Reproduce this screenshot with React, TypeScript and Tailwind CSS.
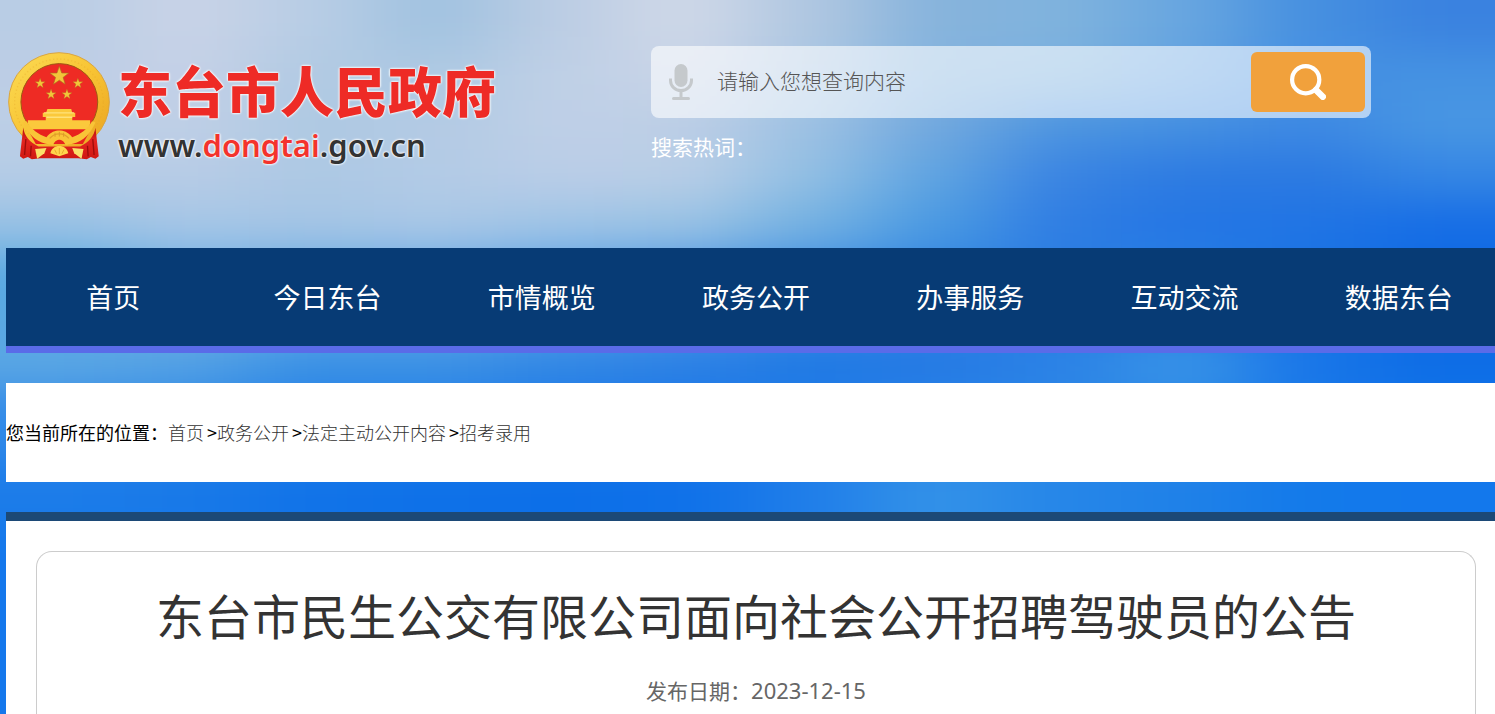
import { type FormEvent } from 'react';

const navItems = ['首页', '今日东台', '市情概览', '政务公开', '办事服务', '互动交流', '数据东台'];

const crumbs = ['首页', '政务公开', '法定主动公开内容', '招考录用'];

// Sky backdrop: rows of colour patches that are blurred into each other
const skyRows = [
  { y: 0, h: 50, colors: ['#b9cde5', '#c9d3e7', '#b8cde5', '#a0c2e0', '#bccde4', '#cfd8e8', '#b0c7e1', '#86b3dc', '#80b3dd', '#68a6e0', '#4690e0', '#3a82e0'] },
  { y: 50, h: 50, colors: ['#bccde5', '#c5d1e7', '#b1cae3', '#aec9e3', '#bfd0e6', '#c9d4e8', '#aac6e3', '#82b2df', '#78afdf', '#62a2e0', '#4490e3', '#4592e2'] },
  { y: 100, h: 50, colors: ['#bccfe6', '#bfcfe6', '#aec9e3', '#b3cae4', '#bfd0e7', '#bccee6', '#9dc1e3', '#72a8de', '#4d95e0', '#4590e1', '#3d88e3', '#4896e3'] },
  { y: 150, h: 50, colors: ['#b5cce6', '#b8cce6', '#adc8e4', '#b3cbe6', '#bacde7', '#b9cee6', '#92bfe3', '#5fa4e1', '#3a84e2', '#2d7be2', '#2b79e2', '#3586e4'] },
  { y: 200, h: 50, colors: ['#98c1e4', '#a6c6e6', '#a4c5e5', '#a9c7e6', '#9fc4e6', '#99c2e4', '#74b1e2', '#4a9ae2', '#2f7de3', '#2476e4', '#2074e4', '#166de5'] },
  { y: 250, h: 90, colors: ['#5aa9e2', '#74b1e5', '#6cace5', '#6cabe6', '#5ea3e6', '#529ae4', '#408fe2', '#3486e2', '#2a7ee3', '#287fe4', '#1a74e5', '#0f6be5'] },
  { y: 340, h: 50, colors: ['#5aa6e4', '#52a0e4', '#3890e5', '#3a90e5', '#3086e5', '#2b80e5', '#1e78e4', '#2478e4', '#2b82e6', '#3a95e7', '#1976e8', '#0d6de6'] },
  { y: 390, h: 70, colors: ['#328ae8', '#2f88e8', '#2680e7', '#2580e7', '#1f7be7', '#1c78e7', '#227ee7', '#2986e7', '#2b86e7', '#2b88e7', '#1979e8', '#1274ea'] },
  { y: 460, h: 70, colors: ['#1c7ce9', '#1879e8', '#1173e8', '#0e71e8', '#0c6fe8', '#0f71e9', '#207ee9', '#3392e8', '#2686e8', '#1f81e8', '#137aea', '#1378ec'] },
  { y: 530, h: 184, colors: ['#1578ec', '#1578ec', '#1173e8', '#0e71e8', '#0c6fe8', '#0f71e9', '#207ee9', '#3392e8', '#2686e8', '#1f81e8', '#137aea', '#1378ec'] },
];

const SkyBackdrop = () => (
  <svg
    className="absolute inset-0 -z-10 h-full w-full"
    viewBox="0 0 1500 714"
    preserveAspectRatio="none"
    aria-hidden="true"
  >
    <defs>
      <filter
        id="sky-blur"
        x="-200"
        y="-100"
        width="1900"
        height="950"
        filterUnits="userSpaceOnUse"
        colorInterpolationFilters="sRGB"
      >
        <feGaussianBlur stdDeviation="46 20" />
      </filter>
    </defs>
    <g filter="url(#sky-blur)">
      {skyRows.map((row, r) =>
        row.colors.map((color, c) => (
          <rect
            key={`${r}-${c}`}
            x={c === 0 ? -200 : c * 125}
            y={r === 0 ? -100 : row.y}
            width={c === 0 ? 326 : c === 11 ? 350 : 126}
            height={r === 0 ? 151 : r === 9 ? 320 : row.h + 1}
            fill={color}
          />
        )),
      )}
    </g>
  </svg>
);

const STAR = 'M0-10 2.4-3.2 9.5-3.1 3.8 1.2 5.9 8.1 0 4-5.9 8.1-3.8 1.2-9.5-3.1-2.4-3.2z';

const Emblem = () => (
  <svg className="h-[111px] w-[102px] shrink-0" viewBox="24 33 308 333" role="img" aria-label="国徽">
    <defs>
      <linearGradient id="gold" x1="0" y1="0" x2="1" y2="1">
        <stop offset="0" stopColor="#fbdc55" />
        <stop offset="0.5" stopColor="#f8c434" />
        <stop offset="1" stopColor="#e9a11f" />
      </linearGradient>
      <linearGradient id="drape" x1="0" y1="0" x2="0" y2="1">
        <stop offset="0" stopColor="#b80f0c" />
        <stop offset="0.4" stopColor="#e32520" />
        <stop offset="1" stopColor="#cf1812" />
      </linearGradient>
    </defs>
    <ellipse cx="178" cy="186" rx="152" ry="149" fill="url(#gold)" stroke="#d9a441" strokeWidth="3" />
    <ellipse cx="178" cy="187" rx="134" ry="131" fill="none" stroke="#e6a628" strokeWidth="4" strokeDasharray="4 7" opacity="0.35" />
    <circle cx="179" cy="186" r="116" fill="#ee2b24" stroke="#9c5a12" strokeWidth="3" />
    <g fill="#f2c53a" stroke="#a8701c" strokeWidth="0.6">
      <path d={STAR} transform="translate(179 108) scale(3)" />
      <path d={STAR} transform="translate(121 130) scale(1.6)" />
      <path d={STAR} transform="translate(235 130) scale(1.6)" />
      <path d={STAR} transform="translate(154 163) scale(1.6)" />
      <path d={STAR} transform="translate(202 163) scale(1.6)" />
    </g>
    <path d="M143 207h72l3 11h9v13h-9v10h54v9l-4 19H90l-6-19v-9h54v-10h-9v-13h10z" fill="#fbc93c" />
    <path d="M133 219h90M140 232h78" stroke="#ffe27a" strokeWidth="4" />
    <path d="M84 269h190l-24 44H108z" fill="#e8231d" />
    {/* red drapes on both sides with the gold band above them */}
    <path d="M70 264c4 26 20 44 46 56h126c26-12 42-30 46-56l10 86-10 7-14-5-12 7-26-3H122l-26 3-12-7-14 5-10-7z" fill="url(#drape)" />
    <path d="M70 248c16 34 34 56 68 64l22 4c6-14 14-16 19-16s13 2 19 16l22-4c34-8 52-30 68-64l-10-4c-14 24-36 40-60 48-14-16-26-20-39-20s-25 4-39 20c-24-8-46-24-60-48z" fill="#f9c437" />
    <path d="M150 296c8-10 18-14 29-14s21 4 29 14" fill="none" stroke="#e2a02a" strokeWidth="4" />
    <path d="M166 279v12M179 276v14M192 279v12" stroke="#dd9b28" strokeWidth="3" />
    <path d="M106 328l34-3-6 16-22 16z" fill="#fbe06a" />
    <path d="M252 328l-34-3 6 16 22 16z" fill="#fbe06a" />
    <path d="M152 341c2-14 14-22 27-22s25 8 27 22l-16 5-11 4-11-4z" fill="#ffd54c" />
    <path d="M165 330l6 12M179 325v18M193 330l-6 12" stroke="#e8a92c" strokeWidth="3" />
    <path d="M78 298l-4 48M94 318l-2 32M280 298l4 48M264 318l2 32" stroke="#9c0d0b" strokeWidth="4" fill="none" />
  </svg>
);

const MicIcon = () => (
  <svg className="h-9 w-6 shrink-0" viewBox="0 0 24 36" aria-hidden="true">
    <rect x="5.500" y="0" width="13" height="23" rx="6.500" fill="#c5c9cc" />
    <path d="M1.500 14.500v2a10.500 10 0 0 0 21 0v-2M12 27v7" fill="none" stroke="#c5c9cc" strokeWidth="3" />
    <rect x="3" y="33" width="18" height="3" rx="1.500" fill="#c5c9cc" />
  </svg>
);

const SearchIcon = () => (
  <svg className="h-9 w-9" viewBox="0 0 36 36" fill="none" stroke="#fff" aria-hidden="true">
    <circle cx="15.700" cy="15.700" r="13.600" strokeWidth="4.200" />
    <path d="M26 26l6.800 6.800" strokeWidth="6.500" strokeLinecap="round" />
  </svg>
);

const Header = () => {
  const handleSubmit = (e: FormEvent) => e.preventDefault();

  return (
    <header className="flex h-[248px] items-start pl-2 pt-[46px]">
      <a href="#" className="flex w-[643px] shrink-0 gap-2 pt-[5px]">
        <Emblem />
        <span className="flex flex-col gap-2 pt-3 [text-shadow:0_0_2px_#fff,0_0_2px_#fff,0_0_3px_#fff]">
          <span className="text-[54px] font-black leading-[54px] text-[#ee2b26]">东台市人民政府</span>
          <span className="font-['Noto_Sans'] text-[31px] font-semibold leading-10 text-[#333]">
            www.<span className="text-[#f3332d]">dongtai</span>.gov.cn
          </span>
        </span>
      </a>

      <div className="max-w-[720px] flex-1">
        <form
          onSubmit={handleSubmit}
          className="flex h-[72px] items-center rounded-lg bg-white/60 p-1.5 pl-[18px]"
        >
          <MicIcon />
          <input
            type="text"
            aria-label="搜索内容"
            placeholder="请输入您想查询内容"
            className="h-full min-w-0 flex-1 bg-transparent pb-1 pl-6 text-[21px] font-light text-[#333] outline-none placeholder:text-[#555]"
          />
          <button
            type="submit"
            aria-label="搜索"
            className="flex h-[60px] w-[114px] items-center justify-center rounded-md bg-[#f1a13c]"
          >
            <SearchIcon />
          </button>
        </form>
        <p className="mt-3 text-[21px] leading-8 text-white">搜索热词：</p>
      </div>
    </header>
  );
};

export default function App() {
  return (
    <div className="relative isolate min-h-screen overflow-hidden font-['Noto_Sans_CJK_SC',sans-serif]">
      <SkyBackdrop />
      <Header />

      {/* content runs slightly past the right edge of the window */}
      <div className="ml-1.5 -mr-[11px]">
        <nav className="grid grid-cols-7 border-b-[7px] border-[#5a6be8] bg-[#073b75]">
          {navItems.map((item) => (
            <a key={item} href="#" className="text-center text-[27px] leading-[98px] text-white">
              {item}
            </a>
          ))}
        </nav>

        <div className="mt-[30px] flex h-[99px] items-center bg-white text-[18px] text-black">
          <span>您当前所在的位置：</span>
          {crumbs.map((crumb, i) => (
            <span key={crumb} className="flex">
              {i > 0 && <span className="pl-[3px]">&gt;</span>}
              <a href="#" className="font-light text-[#333]">{crumb}</a>
            </span>
          ))}
        </div>

        <main className="mt-[30px] border-t-[9px] border-[#1c4976] bg-white px-[30px] pt-[30px]">
          <article className="min-h-[163px] rounded-t-2xl border border-b-0 border-[#ccc] pt-7 text-center">
            <h1 className="text-[48px] leading-[68px] text-[#333]">
              东台市民生公交有限公司面向社会公开招聘驾驶员的公告
            </h1>
            <p className="mt-6 text-[21px] leading-9 text-[#666]">
              发布日期：<time dateTime="2023-12-15" className="font-['Noto_Sans'] text-[22px]">2023-12-15</time>
            </p>
          </article>
        </main>
      </div>
    </div>
  );
}
